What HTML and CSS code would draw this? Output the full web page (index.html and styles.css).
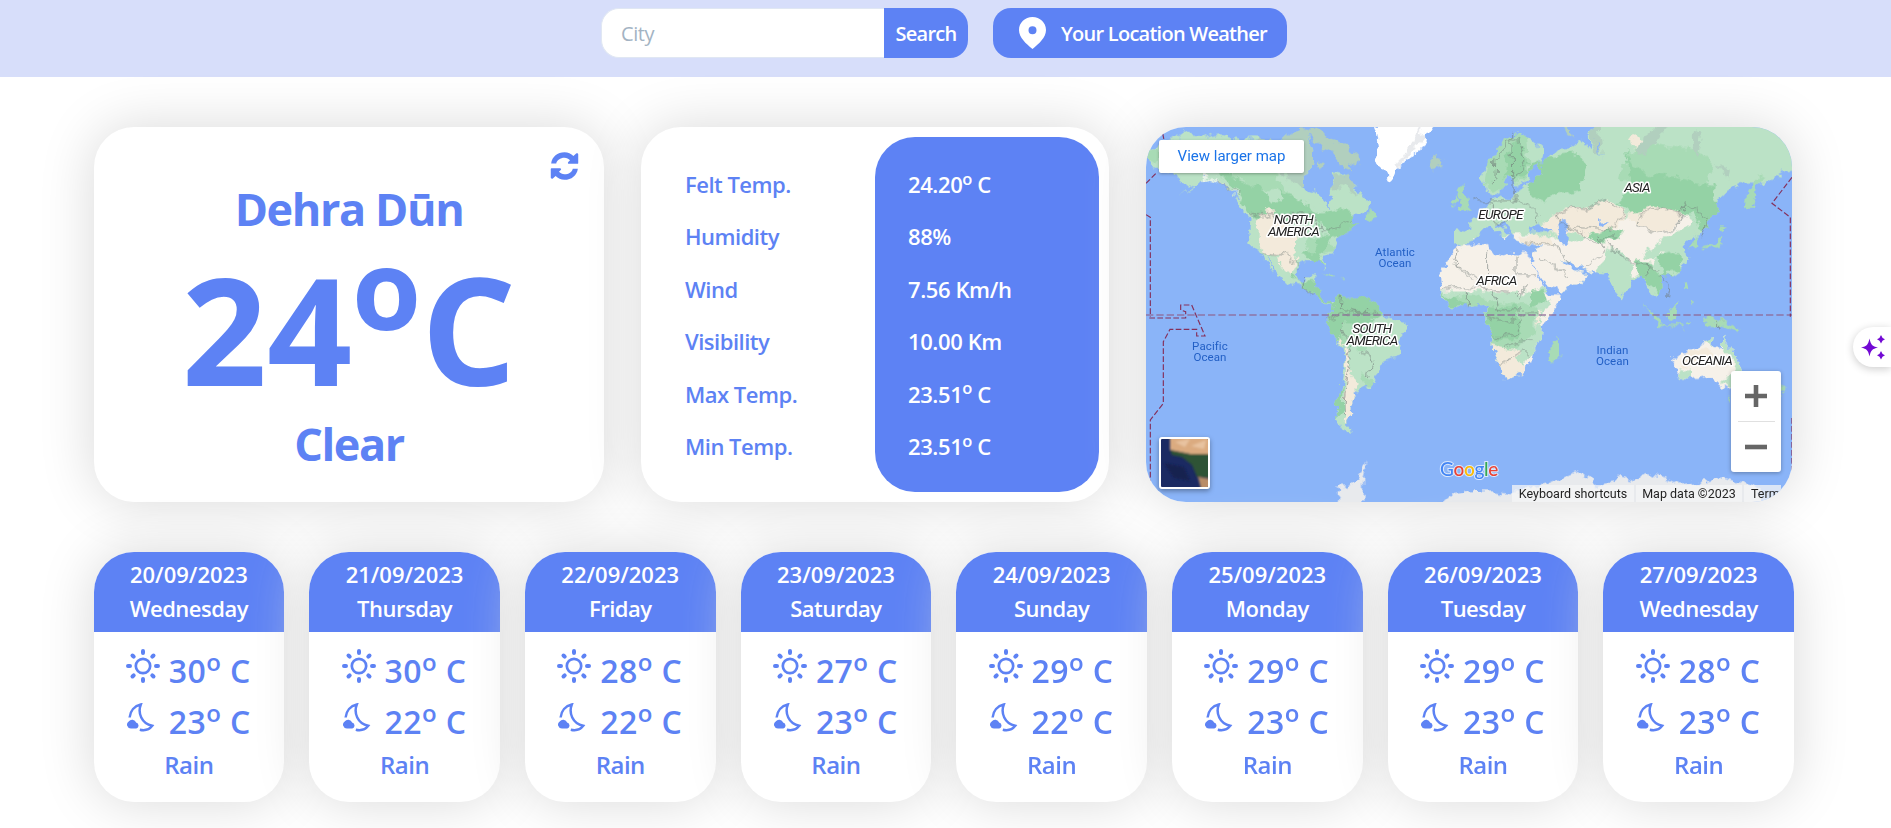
FILE: index.html
```html
<!DOCTYPE html>
<html lang="en">
<head>
<meta charset="utf-8">
<title>Weather</title>
<link rel="stylesheet" href="styles.css">
</head>
<body>
<svg class="defs" width="0" height="0">
  <symbol id="sun" viewBox="0 0 34 34"><g fill="none" stroke="currentColor"><circle cx="17" cy="17" r="7.2" stroke-width="2.7"/><path stroke-width="4" stroke-linecap="round" d="M17 2v2M17 30v2M2 17h2M30 17h2M6.5 6.5l1.2 1.2M26.3 26.3l1.2 1.2M6.5 27.5l1.2-1.2M26.3 7.7l1.2-1.2"/></g></symbol>
  <symbol id="moon" viewBox="0 0 28 29"><path fill="none" stroke="currentColor" stroke-width="2.5" d="M2.6 14.5C3.2 8 7.5 3 13.800 1.500C10.5 10 14.500 20.500 25.200 22.800C22.500 26.400 17.500 27.800 12.800 26.700"/><path fill="currentColor" d="M3.900 25.600a3.900 3.900 0 0 1-2.200-7.100a4.200 4.200 0 0 1 7.400 1.100a3.100 3.100 0 0 1 .2 6z"/></symbol>
</svg>
<header class="topbar">
  <form class="search">
    <input class="search-input" type="text" placeholder="City">
    <button class="search-btn" type="button">Search</button>
  </form>
  <button class="locate" type="button">
    <svg class="pin" viewBox="0 0 27 32"><path fill="#fff" fill-rule="evenodd" d="M13.500 0C6 0 0 5.700 0 12.900C0 20.500 7 26.500 13.500 32C20 26.500 27 20.500 27 12.900C27 5.700 21 0 13.500 0zM13.500 9.300a4 4 0 1 1 0 8a4 4 0 0 1 0-8z"/></svg>
    <span>Your Location Weather</span>
  </button>
</header>
<main class="page">
  <section class="overview">
    <article class="card current">
      <svg class="refresh" viewBox="0 0 512 512"><path fill="currentColor" d="M12 208C28 85 129 4 256 4c66 0 120 25 163 68l50-43c15-13 38-5 38 15v155c0 11-8 18-18 18H338c-20 0-27-22-13-36l32-31c-28-29-60-46-101-46-77 0-140 47-151 104zM500 304C484 427 383 508 256 508c-66 0-120-25-163-68l-50 43c-15 13-38 5-38-15V313c0-11 8-18 18-18h151c20 0 27 22 13 36l-32 31c28 29 60 46 101 46 77 0 140-47 151-104z"/></svg>
      <h1 class="city">Dehra Dūn</h1>
      <p class="temp">24<sup>o</sup>C</p>
      <h2 class="sky">Clear</h2>
    </article>
    <article class="card details">
      <ul class="names"><li>Felt Temp.</li><li>Humidity</li><li>Wind</li><li>Visibility</li><li>Max Temp.</li><li>Min Temp.</li></ul>
      <ul class="values"><li>24.20<sup>o</sup> C</li><li>88%</li><li>7.56 Km/h</li><li>10.00 Km</li><li>23.51<sup>o</sup> C</li><li>23.51<sup>o</sup> C</li></ul>
    </article>
    <article class="card map">
      <svg class="world" viewBox="0 0 646 375" width="646" height="375">
        <defs>
          <filter id="coast" filterUnits="userSpaceOnUse" x="0" y="0" width="1980" height="1160" color-interpolation-filters="sRGB"><feTurbulence type="fractalNoise" baseFrequency=".035" numOctaves="3" seed="4"/><feDisplacementMap in="SourceGraphic" scale="36" xChannelSelector="R" yChannelSelector="G"/></filter>
          <path id="namerica" d="M18 80L40 85 60 65 100 58 130 38 180 42 200 52 240 42 300 60 340 55 400 65 450 45 488 30 510 55 520 100 515 145 490 160 492 205 525 215 550 238 562 265 572 235 577 210 573 175 580 158 612 162 625 190 645 195 665 225 690 252 688 268 640 285 632 310 655 310 640 325 615 340 600 348 590 365 582 385 575 400 553 410 562 440 555 443 543 418 515 418 482 422 470 440 471 470 480 490 498 488 508 468 524 470 520 500 540 505 548 535 562 548 580 540 590 550 570 558 545 545 520 520 497 502 470 496 440 487 420 465 400 440 385 415 380 412 401 455 394 455 376 425 368 402 345 390 332 365 327 330 332 295 312 275 300 250 285 225 262 200 240 185 205 175 185 180 155 210 122 230 160 200 135 195 115 175 110 160 60 150 18 130z"/>
          <path id="samerica" d="M575 560L585 535 605 525 612 535 660 532 700 540 720 560 724 585 770 600 800 615 800 635 785 655 778 705 730 725 720 755 690 790 685 805 640 820 645 835 632 865 638 875 620 905 618 915 635 940 600 925 588 870 603 800 615 720 610 680 580 650 560 615 570 590z"/>
          <path id="africa" d="M982 375L1045 372 1048 395 1095 412 1105 402 1165 405 1175 430 1210 500 1222 525 1260 525 1260 540 1210 610 1205 655 1180 690 1175 720 1150 760 1125 778 1095 780 1075 735 1055 675 1060 640 1040 605 1040 560 1020 555 960 560 940 562 905 525 900 465 935 400 960 378z"/>
          <path id="eurasia" d="M942 332L948 325 985 330 985 305 1020 290 1035 260 1060 235 1070 225 1115 235 1125 225 1145 210 1155 190 1190 185 1200 130 1175 150 1160 180 1125 200 1110 160 1085 215 1050 225 1020 180 1025 160 1075 85 1105 55 1135 40 1165 50 1210 90 1200 130 1245 90 1290 85 1330 60 1350 85 1345 40 1370 10 1975 10 1975 150 1935 155 1880 190 1830 188 1800 190 1760 215 1740 235 1730 270 1700 320 1675 345 1645 350 1635 365 1640 400 1630 440 1590 470 1560 465 1565 500 1555 535 1540 520 1520 490 1510 460 1480 480 1455 520 1440 545 1415 490 1400 460 1340 455 1300 430 1262 420 1290 445 1345 465 1320 490 1260 515 1240 495 1195 430 1180 400 1205 380 1140 370 1130 355 1150 340 1210 335 1240 340 1215 315 1180 320 1165 345 1150 370 1115 340 1090 305 1070 310 1110 345 1095 352 1060 325 1030 325 1000 360 970 380 942 370z"/>
          <path id="aus" d="M1595 720L1620 700 1640 700 1680 675 1700 660 1725 650 1720 675 1745 685 1752 650 1775 690 1805 740 1810 770 1790 800 1750 808 1700 765 1620 780 1605 775 1610 755z"/>
          <clipPath id="cn"><use href="#namerica"/></clipPath><clipPath id="cs"><use href="#samerica"/></clipPath><clipPath id="cf"><use href="#africa"/></clipPath><clipPath id="ce"><use href="#eurasia"/></clipPath><clipPath id="ca"><use href="#aus"/></clipPath>
        </defs>
        <rect width="646" height="375" fill="#8ab4f8"/>
        <g transform="translate(-6 -7) scale(.33333)">
          <g filter="url(#coast)">
          <use href="#namerica" fill="#bbe2c6"/>
          <g clip-path="url(#cn)">
            <path fill="#b1cfbe" d="M370 10h150v152l-30 45-45-25-40-35-70-30z"/>
            <path fill="#94d2a5" d="M230 130l70 55 50 15 60 10 60 20 60 50 60-15 60 20 60-5v50l-90 30-50-15-40-50-70 10-50-20-70 10-80-120-50-30z"/>
            <path fill="#a8dbb5" d="M220 80l70 20 110 60 50 60-80-10-90-40zM500 360l50-20 30 50-70 20z"/>
            <path fill="#bbe2c6" d="M370 210l40 0 20 25-30 10zM430 190l50 10 60 40 10 25-60-20z"/>
            <path fill="#94d2a5" d="M540 350l40-5-30 50-30 15 5-30zM480 400l55 0 25 40-50-20zM440 440l25 40 60 0 60 80-70-30z"/>
            <path fill="#f3eadb" d="M350 300l30-30 40 20 50 50-5 90-15 35-25-25-5-30-50-10-20-45zM360 10h60l-10 52-30-10z"/>
            <path fill="#e7f3e9" d="M185 165l45 10 20 12 40 40-50-35-55-13z"/>
          </g>
          <g fill="#b1cfbe"><path d="M480 22l60 5 20 25 55 25 45 35-5 25-35-10 20 35-40-25-25-40-35-20-30-30-30-5zM530 125l28 10-20 12zM575 165l50 0 35 60-50-30-35 15zM870 115l15-7 28 12-5 17-28 7zM1420 15l20 5 40 8-20 12zM1260 15l20 5 12 22-20-8z"/></g>
          <path fill="#a8dbb5" d="M22 90l25-5 10 15-5 20-34 10zM680 285l15-15 12 25-25 3zM545 458l40 12-5 6zM600 480l22 2-3 5z"/>
          <path fill="#fff" d="M705 10l12 62-12 35 15 40 35 33 10-25 50-45 50-45-10-15 28-40z"/><path fill="#e8eaed" d="M840 22l20 30-30 25-60 75-5-15 55-70z"/>
          <use href="#samerica" fill="#bbe2c6"/>
          <g clip-path="url(#cs)">
            <path fill="#94d2a5" d="M555 520h150l30 50-45 35-5 60-40 20-60-30-35-40z"/><path fill="#a8dbb5" d="M600 610l60 0 50 40-40 40-60-10zM660 765l50 25-20 20z"/>
            <path fill="#f3eadb" d="M600 655l25 30 5 80 20 20-5 40-5 60-25 25-5-40 8-190-25-20z"/><path fill="#94d2a5" d="M590 840l18-50-3 90-15 20z"/>
          </g>
          <use href="#eurasia" fill="#bbe2c6"/>
          <g clip-path="url(#ce)">
            <path fill="#a8dbb5" d="M1050 50l110-10 10 120-80 60-60-20zM1460 100l60-30 160 20 40 50-30 60-160 20-90-40z"/>
            <path fill="#94d2a5" d="M1100 110l35-60 20 40-15 60-45 20zM1110 130l45-40 10 70-50 20zM1170 140l50-30 90-10 25 40-10 50 0 20-80 10-30 20-50-20zM1455 90l20 50 55 25 70 5 70 20 60 10-5 40 25 30-20 60-40 10-30-60-40 5-60 10-70-10-60-30 40-50z"/>
            <path fill="#f6f1e9" d="M1220 350l70 20 100-40 90-50 150 0 30 20-30 50-40 30-60 60-50 30-60-15-25-40-40 60-50 40-180 20-90-80-40-100 170-15z"/>
            <path fill="#f3eadb" d="M1215 300l60-35 70 0 60-30 55 50-20 30-65 40-90-20-25 20-65-30zM1140 350l50-8 50 15-10 18-80 0zM1460 285l80-25 90 20-20 40-60 15-50-15zM1465 55l30-10 15 18-20 22-25-10z"/>
            <path fill="#94d2a5" d="M1350 350l50-25 50 15-35 20-35 10zM1480 420l50 10 25 35 30-10 15 60-30 20-60-60zM1550 410l40-15 30 20 5 30-50 15z"/>
            <path fill="#bbe2c6" d="M1395 380l25 5 60 50-15 65-30 45-50-80zM1510 405l60-50 90-40 20 80-35 40-20-40-60 0-20 30z"/>
            <path fill="#b1cfbe" d="M1350 10h25l10 92-20-5-15-40zM1500 60l50-38h30l-30 40-30 40-25-5zM1670 22l15 30-15 60-15-40zM1730 130l40 20-5 22z"/>
            <path fill="#8ab4f8" d="M1250 320l15-18 20 10-5 25 0 40-18-15zM1370 60l12 40 5 10-15-20zM1380 302l25-2-10 12-15 0z"/>
          </g>
          <use href="#africa" fill="#f6f1e9"/>
          <g clip-path="url(#cf)"><path fill="#bbe2c6" d="M890 515l180 0 110 5 40-30 10 50-25 60 15 60-60 60-20 60-60 10-50-110z"/><path fill="#a8dbb5" d="M900 535l90-10 80 20 60 10 60 0-10 90-60 40-80-10-10-70z"/><path fill="#94d2a5" d="M1035 560l90 0 20 50-20 50-60 0-25-50zM905 520l50 20 30 20-50 0zM1180 510l30 0 10 30-50 20z"/><path fill="#f3eadb" d="M1050 672l90 20-10 20 35 30-40 50-40 0zM1190 570l20 0-20 50z"/></g>
          <path fill="#f6f1e9" d="M1215 522l48 2-55 95-10-5 20-45 20-15zM1175 425l70-10 60 35-40 65-50-20z"/>
          <path fill="#a8dbb5" d="M1256 652l2 60-30 12-5-25 15-20zM963 200l10-5 12 50 5 20-35 10 10-25-10-20zM938 240l15-10 3 22-15 5zM1515 555l60 60 60 5-2 5-75-8-30-40zM1580 570l40-20-5 50-30-5zM1635 600h15l-5 12zM1690 590l50 5 60 30-10 10-50-20-40 0zM1633 485l10 0 5 20-15 0zM1650 540l12 5-5 10zM1920 800l20 4-25 22zM1765 825l10 10-2 12z"/>
          <path fill="#a8dbb5" d="M1850 175l20-5-25 40-10 55-15-5 5-45zM1745 315l18 5-10 15zM1740 350l5 20-35 20-30 0 45-20zM1663 345l10 35-15 8-5-30z"/>
          <use href="#aus" fill="#f6f1e9"/><g clip-path="url(#ca)"><path fill="#bbe2c6" d="M1680 655l60-10-20 30zM1745 640l70 100 0 80-80-30 30-15 20-50-40-50zM1605 760l45-15 0 40-50 0z"/><path fill="#f3eadb" d="M1640 700l50-15 30 15 20 40-90-10-30 20z"/></g>
          <path fill="#e8eaed" d="M682 1027l-12 45-4 94-75 0 10-48-15-15 35 0 30-28zM897 1156l35-32 55-10 70 0 60 10 40-20 60-10 90-40 55 25 0 20 60-10 5-25 50 15 40-20 60 15 40 20 80-10 60-10 100 35 20 50z"/>
          <g class="borders">
            <path d="M330 284h195l25 55 40-15 45-27M235 180l60 45M368 402l50 5 10-8 45 43M500 470l-5 30 20 20M602 530l-5 30 45 15 65 0M560 600l60-20 70-5M600 610l10 40 30 15-20 40M660 690l40 25-18 60M618 700l15 20-15 55-8 110"/>
            <path d="M1060 195l5-80 30-30 20-25 25 0 15 70-30 45M1115 40l5 190 50 30 30 30-20 25M1000 235l60 15 0 50M1050 240l90 0M1050 285l40 30 30-30M1245 285l45-20 50 5 55-35 60 50-45 45-75-5-70-10zM1280 315l90 55 55-25M1500 280l60-15 70 20-20 40-60 12-60-20zM1620 285l15-35 40 30 30 15-20 55M1380 345l10 50-50 50M1410 370l30 45 60 20 50 10M1515 430l10 40M1550 465l35 25-5 45M1160 370l90 5 40 60M1200 410l90 55"/>
            <path d="M955 390l-10 45 55 30 40 50M1040 400l0 85M1125 410v55h60M940 430l60 50M905 510l60-10 80 5 60 10M985 510l0 50M1060 510l20 60 60 0M1040 590l60 20 30-20M1060 650l60 0 30-60M1100 680l45-20 30 0M1100 720l50-30 20 20M1075 740l40-25M1140 580l50 0M1130 530l40-40M1739 600v25"/>
          </g>
          </g>
          <path class="equator" d="M18 585H1956"/>
          <path class="dateline" d="M68 40l5 25M18 190l30-30M18 284l13 8V590M28 594H137V575l-15-5V555h33l40 93H170V628H90L70 665V850L31 900V1130M1956 172l-60 78 55 42V590M1956 894V1120"/>
        </g>
        <g class="region"><text x="147.500" y="96.500">NORTH</text><text x="147.500" y="108.500">AMERICA</text><text x="226" y="206">SOUTH</text><text x="226" y="218">AMERICA</text><text x="354.500" y="92">EUROPE</text><text x="350.500" y="158">AFRICA</text><text x="491" y="65">ASIA</text><text x="561" y="238">OCEANIA</text></g>
        <g class="ocean"><text x="249" y="129">Atlantic</text><text x="249" y="140">Ocean</text><text x="64" y="222.500">Pacific</text><text x="64" y="234">Ocean</text><text x="466.500" y="227">Indian</text><text x="466.500" y="238">Ocean</text></g>
        <text class="google" x="294" y="349"><tspan fill="#4285f4">G</tspan><tspan fill="#ea4335">o</tspan><tspan fill="#fbbc05">o</tspan><tspan fill="#4285f4">g</tspan><tspan fill="#34a853">l</tspan><tspan fill="#ea4335">e</tspan></text>
      </svg>
      <a class="larger">View larger map</a>
      <svg class="satellite" viewBox="0 0 47 48"><defs><filter id="soft"><feGaussianBlur stdDeviation="1"/></filter></defs><rect width="47" height="48" fill="#1b2a62"/><g filter="url(#soft)"><path fill="#dbab80" d="M9-2h42v18l-22-1-20-4z"/><path fill="#e8c3a0" d="M14 3l15-3-5 8zM30 7l15-6-2 9z"/><path fill="#2d5236" d="M9 11l20 4h20v24l-13-1-5-12-10-8-10-2z"/><path fill="#b98d68" d="M37 38l12 2v10h-9z"/><path fill="#142150" d="M3 24l20 4 6 14-16-3z"/></g></svg>
      <div class="zoom"><svg viewBox="0 0 24 24"><path fill="#666" d="M9.500 0h5v9.500H24v5H14.500V24h-5v-9.500H0v-5h9.500z"/></svg><i></i><svg viewBox="0 0 24 24"><path fill="#666" d="M0 9.500h24v5H0z"/></svg></div>
      <div class="legal"><span>Keyboard shortcuts</span><span>Map data ©2023</span><span class="terms">Terms</span></div>
    </article>
  </section>
  <section class="forecast">
    <article class="card day"><header><time>20/09/2023</time>Wednesday</header><p><svg class="sun"><use href="#sun"/></svg><b>30<sup>o</sup> C</b></p><p><svg class="moon"><use href="#moon"/></svg><b>23<sup>o</sup> C</b></p><footer>Rain</footer></article>
    <article class="card day"><header><time>21/09/2023</time>Thursday</header><p><svg class="sun"><use href="#sun"/></svg><b>30<sup>o</sup> C</b></p><p><svg class="moon"><use href="#moon"/></svg><b>22<sup>o</sup> C</b></p><footer>Rain</footer></article>
    <article class="card day"><header><time>22/09/2023</time>Friday</header><p><svg class="sun"><use href="#sun"/></svg><b>28<sup>o</sup> C</b></p><p><svg class="moon"><use href="#moon"/></svg><b>22<sup>o</sup> C</b></p><footer>Rain</footer></article>
    <article class="card day"><header><time>23/09/2023</time>Saturday</header><p><svg class="sun"><use href="#sun"/></svg><b>27<sup>o</sup> C</b></p><p><svg class="moon"><use href="#moon"/></svg><b>23<sup>o</sup> C</b></p><footer>Rain</footer></article>
    <article class="card day"><header><time>24/09/2023</time>Sunday</header><p><svg class="sun"><use href="#sun"/></svg><b>29<sup>o</sup> C</b></p><p><svg class="moon"><use href="#moon"/></svg><b>22<sup>o</sup> C</b></p><footer>Rain</footer></article>
    <article class="card day"><header><time>25/09/2023</time>Monday</header><p><svg class="sun"><use href="#sun"/></svg><b>29<sup>o</sup> C</b></p><p><svg class="moon"><use href="#moon"/></svg><b>23<sup>o</sup> C</b></p><footer>Rain</footer></article>
    <article class="card day"><header><time>26/09/2023</time>Tuesday</header><p><svg class="sun"><use href="#sun"/></svg><b>29<sup>o</sup> C</b></p><p><svg class="moon"><use href="#moon"/></svg><b>23<sup>o</sup> C</b></p><footer>Rain</footer></article>
    <article class="card day"><header><time>27/09/2023</time>Wednesday</header><p><svg class="sun"><use href="#sun"/></svg><b>28<sup>o</sup> C</b></p><p><svg class="moon"><use href="#moon"/></svg><b>23<sup>o</sup> C</b></p><footer>Rain</footer></article>
  </section>
</main>
<aside class="assistant"><svg viewBox="0 0 24 25"><path fill="#7209d4" d="M8.500 3.500C10 10 11 11 17 12.500C11 14 10 15 8.500 21.500C7 15 6 14 0 12.500C6 11 7 10 8.500 3.500zM20 0q1 3.500 4 4.300q-3 .8-4 4.200q-1-3.400-4-4.200q3-.8 4-4.300zM20 16q1 3.500 4 4.300q-3 .8-4 4.200q-1-3.400-4-4.200q3-.8 4-4.300z"/></svg></aside>
</body>
</html>
```
FILE: styles.css
```css
* { box-sizing: border-box; }
body { margin: 0; height: 828px; overflow: hidden; background: #fff; color: #5d82f4; font-family: "Open Sans", "Noto Sans", sans-serif; font-weight: 600; }
h1, h2, p, ul { margin: 0; padding: 0; list-style: none; }
.defs { position: absolute; }
sup { position: relative; top: -.5em; font-size: .75em; line-height: 0; vertical-align: baseline; }

.topbar { display: flex; gap: 25px; height: 77px; padding: 8px 0 0 601px; background: #d7defa; }
.search { display: flex; width: 367px; height: 50px; }
.search-input { width: 283px; padding: 0 0 0 19px; border: 1px solid #e0e7f3; border-right: 0; border-radius: 18px 0 0 18px; background: #fff; font: 400 20px "Open Sans", sans-serif; letter-spacing: -.4px; outline: 0; }
.search-input::placeholder { color: #a3b3c3; opacity: 1; }
.search-btn, .locate { border: 0; background: #5d82f4; color: #fff; font: 600 20px "Open Sans", sans-serif; letter-spacing: -.75px; white-space: nowrap; }
.search-btn { width: 84px; padding: 0; border-radius: 0 18px 18px 0; }
.locate { display: flex; align-items: center; gap: 15px; width: 294px; height: 50px; padding: 0 0 0 26px; border-radius: 18px; }
.pin { width: 27px; height: 32px; }

.page { padding: 50px 97px 0 94px; }
.card { position: relative; border-radius: 40px; background: #fff; box-shadow: 0 0 55px #d9d9d9; }
.overview { display: grid; grid-template-columns: 510px 468px 646px; gap: 37px; height: 375px; }
.current { text-align: center; padding-top: 49px; }
.refresh { position: absolute; top: 25px; right: 25px; width: 29px; height: 28px; }
.city, .sky { font-size: 45px; line-height: 66px; font-weight: 700; letter-spacing: -1.4px; }
.temp { font-size: 149px; line-height: 169px; padding-top: 2px; font-weight: 700; letter-spacing: 0; height: 169px; }
.details { display: grid; grid-template-columns: 1fr 224px; padding: 10px; }
.details li { height: 52.4px; line-height: 52.4px; font-size: 22px; letter-spacing: -.5px; }
.details .values li { letter-spacing: -.4px; }
.names { padding: 21px 0 0 34px; }
.values { padding: 21px 0 0 33px; border-radius: 40px; background: #5d82f4; color: #fff; }

.map { overflow: hidden; font-family: Roboto, sans-serif; font-weight: 400; }
.world { display: block; }
.borders { fill: none; stroke: #717b78; stroke-width: 2.5; opacity: .75; }
.equator { fill: none; stroke: #8d6997; stroke-width: 5; stroke-dasharray: 22 9; opacity: .85; }
.dateline { fill: none; stroke: #85305b; stroke-width: 3.5; stroke-dasharray: 17 7; }
.region, .ocean { text-anchor: middle; paint-order: stroke; stroke-linejoin: round; }
.region { fill: #222; stroke: #fff; stroke-width: 3px; font-size: 13.500px; font-style: italic; letter-spacing: -.7px; }
.ocean { fill: #225fc5; font-size: 11.500px; letter-spacing: .1px; }
.google { font: 500 19px "Lato", sans-serif; paint-order: stroke; stroke: #dce8fb; stroke-width: 2px; letter-spacing: -.3px; }
.larger { position: absolute; left: 13px; top: 13px; width: 145px; height: 33px; background: #fff; border-radius: 2px; box-shadow: 0 1px 3px rgba(0, 0, 0, .3); color: #1a73e8; font-size: 15px; line-height: 32px; text-align: center; }
.satellite { position: absolute; left: 13px; bottom: 13px; width: 51px; height: 52px; border: 2px solid #fff; border-radius: 3px; box-shadow: 0 2px 5px rgba(0, 0, 0, .35); background: #fff; }
.zoom { position: absolute; left: 585px; top: 244px; display: flex; flex-direction: column; align-items: center; justify-content: space-between; width: 50px; height: 101px; padding: 13px 0; background: #fff; border-radius: 3px; box-shadow: 0 1px 4px rgba(0, 0, 0, .3); }
.zoom svg { width: 22px; height: 24px; }
.zoom i { width: 37px; height: 1px; background: #e0e0e0; }
.legal { position: absolute; left: 366px; bottom: 0; display: flex; gap: 2px; width: 269px; height: 17px; overflow: hidden; color: #222; font-size: 12.500px; line-height: 17px; white-space: nowrap; }
.legal span { width: 122px; flex: none; text-align: center; background: rgba(245, 245, 245, .75); }
.legal span + span { width: 106px; }
.legal .terms { width: 48px; padding-left: 7px; text-align: left; }

.forecast { display: grid; grid-template-columns: repeat(8, 1fr); gap: 25px; margin: 50px 0 0 -.5px; }
.day { height: 250px; overflow: hidden; text-align: center; }
.day header { height: 80px; padding-top: 5px; background: #5d82f4; color: #fff; font-size: 22px; line-height: 34px; letter-spacing: -.5px; }
.day time { display: block; letter-spacing: 0; }
.day p { display: flex; justify-content: center; gap: 9px; height: 51px; }
.day header + p { margin-top: 11px; }
.day b { font-size: 32px; line-height: 56px; font-weight: 600; width: 83px; text-align: left; white-space: nowrap; letter-spacing: .4px; }
.sun { width: 34px; height: 34px; margin-top: 6px; }
.moon { width: 28px; height: 29px; margin: 9px 5px 0 1px; }
.day footer { padding-top: 2px; font-size: 24px; line-height: 36px; letter-spacing: -.5px; }

.assistant { position: absolute; right: 0; top: 327px; width: 38px; height: 40px; padding: 8px 6px 0 8px; border-radius: 20px 0 0 20px; background: #fff; box-shadow: 0 2px 8px rgba(0, 0, 0, .2); }
.assistant svg { display: block; width: 24px; height: 25px; }
```
